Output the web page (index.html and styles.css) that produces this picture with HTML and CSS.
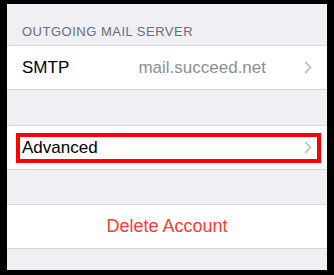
FILE: index.html
```html
<!DOCTYPE html>
<html lang="en">
<head>
  <meta charset="UTF-8">
  <title>Account</title>
  <link rel="stylesheet" href="styles.css">
</head>
<body>
  <div class="screen">
    <div class="section-header">OUTGOING MAIL SERVER</div>
    <div class="group">
      <div class="cell">
        <span class="label">SMTP</span>
        <span class="value">mail.succeed.net</span>
        <svg class="chevron" width="8" height="13" viewBox="0 0 8 13"><polyline points="1.2,1 6.5,6.5 1.2,12" /></svg>
      </div>
    </div>

    <div class="group group-advanced">
      <div class="cell">
        <span class="label">Advanced</span>
        <svg class="chevron" width="8" height="13" viewBox="0 0 8 13"><polyline points="1.2,1 6.5,6.5 1.2,12" /></svg>
        <!-- red box marking the row -->
        <div class="highlight"></div>
      </div>
    </div>

    <div class="group group-delete">
      <div class="cell cell-center">
        <span class="danger">Delete Account</span>
      </div>
    </div>
  </div>
</body>
</html>
```

FILE: styles.css
```css
html, body {
  margin: 0;
  padding: 0;
  background: #000;
}

body {
  font-family: "Liberation Sans", Arial, sans-serif;
}

.screen {
  width: 320px;
  height: 266px;
  margin: 4px 0 0 7px;
  background: #efeff4;
  overflow: hidden;
}

.section-header {
  height: 41px;
  box-sizing: border-box;
  padding: 20px 15px 0;
  font-size: 13px;
  line-height: 16px;
  letter-spacing: 0.5px;
  color: #6d6d72;
}

.group {
  background: #fff;
  border-top: 1px solid #d6d6da;
  border-bottom: 1px solid #d6d6da;
}

.group-advanced {
  margin-top: 35px;
}

.group-delete {
  margin-top: 34px;
}

.cell {
  position: relative;
  height: 43px;
  display: flex;
  align-items: center;
  padding: 0 15px;
  font-size: 17px;
  color: #000;
}

.cell .label {
  flex: 1;
}

.cell .value {
  color: #8e8e93;
  margin-right: 37px;
}

.chevron {
  display: block;
  margin-left: 1px;
}

.chevron polyline {
  fill: none;
  stroke: #c7c7cc;
  stroke-width: 2;
}

.cell-center {
  justify-content: center;
}

.danger {
  font-size: 18px;
  color: #ff3b30;
}

.highlight {
  position: absolute;
  left: 9px;
  top: 7px;
  width: 305px;
  height: 30px;
  box-sizing: border-box;
  border: 4px solid #f00;
}
```
